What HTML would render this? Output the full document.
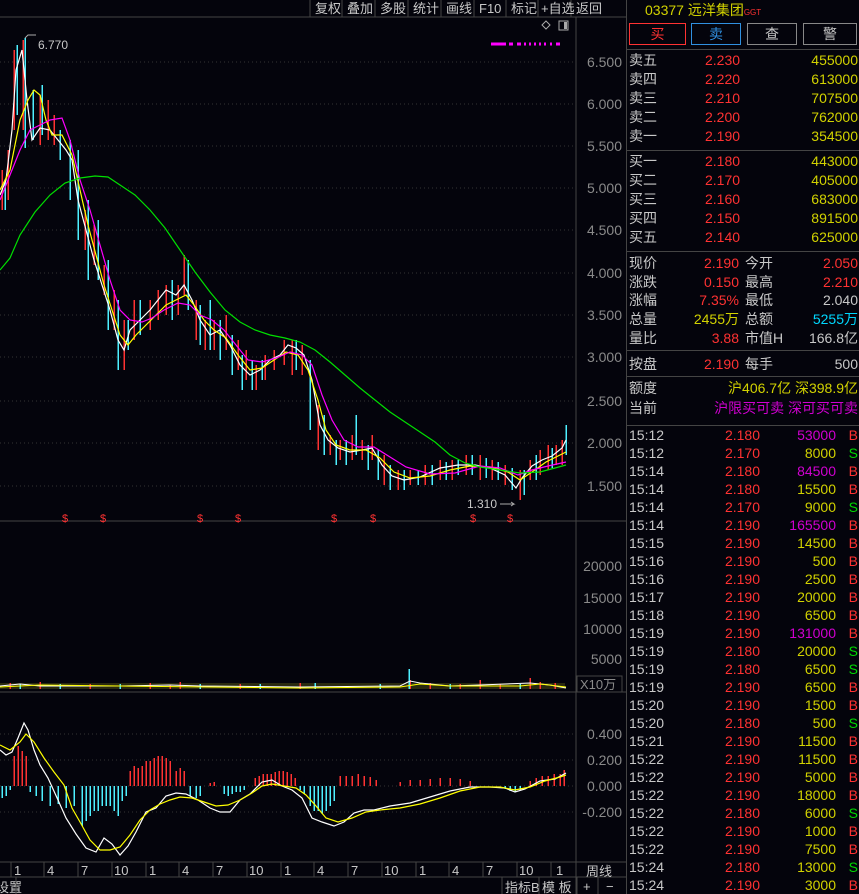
<!DOCTYPE html>
<html><head><meta charset="utf-8"><style>
*{margin:0;padding:0;box-sizing:border-box}
body{width:859px;height:894px;background:#04040c;overflow:hidden;font-family:"Liberation Sans","Noto Sans CJK SC",sans-serif;font-size:14px;color:#c8c8c8;position:relative}
.a{position:absolute;white-space:nowrap}
.r{color:#ff3232}.y{color:#d2d200}.c{color:#00d8ff}.m{color:#d000d0}.g{color:#00d800}.w{color:#c8c8c8}
.rp{position:absolute;left:626px;top:0;width:233px;height:894px;border-left:1px solid #444}
.row{position:absolute;left:2px;width:229px;height:18px;line-height:18px}
.row span{position:absolute}
.ce{shape-rendering:crispEdges}
</style></head><body>
<svg class="a" style="left:0;top:0" width="626" height="894">
<g fill="#c8c8c8" font-size="13" font-family="Liberation Sans,Noto Sans CJK SC,sans-serif">
<line x1="0" y1="17" x2="626" y2="17" stroke="#444"/>
<g stroke="#444"><line x1="310" y1="0" x2="310" y2="17"/><line x1="342" y1="0" x2="342" y2="17"/><line x1="375" y1="0" x2="375" y2="17"/><line x1="408" y1="0" x2="408" y2="17"/><line x1="441" y1="0" x2="441" y2="17"/><line x1="474" y1="0" x2="474" y2="17"/><line x1="506" y1="0" x2="506" y2="17"/><line x1="538" y1="0" x2="538" y2="17"/><line x1="571" y1="0" x2="571" y2="17"/></g>
<text x="315" y="13">复权</text><text x="347" y="13">叠加</text><text x="380" y="13">多股</text><text x="413" y="13">统计</text><text x="446" y="13">画线</text><text x="479" y="13">F10</text><text x="511" y="13">标记</text><text x="541" y="13">+自选</text><text x="576" y="13">返回</text>
</g>
<line x1="576" y1="17" x2="576" y2="894" stroke="#444"/>
<line x1="0" y1="521" x2="626" y2="521" stroke="#444"/>
<line x1="0" y1="692" x2="626" y2="692" stroke="#444"/>
<line x1="0" y1="862" x2="626" y2="862" stroke="#444"/>
<line x1="0" y1="877" x2="626" y2="877" stroke="#444"/>
<g stroke="#333" stroke-dasharray="1,3">
<line x1="0" y1="62" x2="576" y2="62"/><line x1="0" y1="104" x2="576" y2="104"/><line x1="0" y1="146" x2="576" y2="146"/><line x1="0" y1="188" x2="576" y2="188"/><line x1="0" y1="230" x2="576" y2="230"/><line x1="0" y1="273" x2="576" y2="273"/><line x1="0" y1="315" x2="576" y2="315"/><line x1="0" y1="357" x2="576" y2="357"/><line x1="0" y1="401" x2="576" y2="401"/><line x1="0" y1="443" x2="576" y2="443"/><line x1="0" y1="486" x2="576" y2="486"/>
<line x1="0" y1="734" x2="576" y2="734"/><line x1="0" y1="760" x2="576" y2="760"/><line x1="0" y1="786" x2="576" y2="786"/><line x1="0" y1="812" x2="576" y2="812"/>
</g>
<g fill="#8a8a8a" font-size="14" font-family="Liberation Sans,sans-serif" text-anchor="end">
<text x="622" y="67">6.500</text><text x="622" y="109">6.000</text><text x="622" y="151">5.500</text><text x="622" y="193">5.000</text><text x="622" y="235">4.500</text><text x="622" y="278">4.000</text><text x="622" y="320">3.500</text><text x="622" y="362">3.000</text><text x="622" y="406">2.500</text><text x="622" y="448">2.000</text><text x="622" y="491">1.500</text>
<text x="622" y="571">20000</text><text x="622" y="603">15000</text><text x="622" y="634">10000</text><text x="622" y="664">5000</text>
<text x="622" y="739">0.400</text><text x="622" y="765">0.200</text><text x="622" y="791">0.000</text><text x="622" y="817">-0.200</text>
</g>
<rect x="577" y="676" width="45" height="16" fill="none" stroke="#444"/>
<text x="580" y="689" fill="#8a8a8a" font-size="13" font-family="Liberation Sans,Noto Sans CJK SC,sans-serif">X10万</text>
<path d="M546 21 l4 4 -4 4 -4 -4z" fill="none" stroke="#aaa"/>
<rect x="559" y="21" width="9" height="9" fill="none" stroke="#aaa"/><rect x="564" y="22" width="3" height="7" fill="#aaa"/>
<path d="M491 44 h15 M509 44 h4 M517 44 h4 M524 44 h2 M529 44 h2 M534 44 h2 M539 44 h2 M544 44 h2 M550 44 h2 M556 44 h4" stroke="#ff00ff" stroke-width="3"/>
<g stroke-width="1.5" class="ce">
<path stroke="#ff3232" d="M2 170v40 M8 150v50 M14 50v80 M23 40v90 M40 95v50 M48 100v40 M54 115v30 M85 210v40 M94 225v40 M104 265v30 M114 290v40 M124 320v50 M134 300v40 M150 300v30 M158 290v30 M166 285v30 M178 285v30 M184 255v40 M196 300v40 M205 320v30 M214 320v30 M226 315v35 M238 340v30 M246 350v30 M256 365v25 M265 355v25 M274 350v20 M284 340v25 M292 340v35 M302 345v30 M318 405v45 M330 435v20 M340 440v20 M352 435v25 M362 440v20 M372 435v25 M384 455v30 M398 470v20 M410 470v15 M425 465v20 M440 460v20 M452 460v20 M466 455v20 M480 455v25 M492 460v20 M505 465v20 M520 470v30 M530 460v20 M540 450v25 M548 445v25 M556 445v20 M562 440v25"/>
<path stroke="#4ef0ff" d="M5 180v30 M17 45v70 M25 38v110 M33 90v50 M42 85v50 M60 130v30 M70 140v60 M78 150v90 M88 200v80 M98 220v60 M108 260v70 M118 300v70 M128 320v30 M140 300v35 M172 280v40 M188 260v50 M200 305v40 M210 300v50 M220 320v40 M232 335v40 M242 355v35 M252 360v30 M262 360v20 M296 340v30 M310 360v70 M324 415v40 M336 440v25 M346 440v25 M356 415v40 M368 445v25 M378 450v30 M390 465v25 M404 470v20 M418 470v15 M432 465v20 M446 462v18 M458 460v15 M472 455v20 M486 458v20 M498 462v18 M512 468v22 M524 470v25 M536 455v25 M552 448v20 M566 425v30"/>
</g>
<polyline fill="none" stroke="#ffffff" stroke-width="1.2" points="0,195 6,180 12,130 16,70 22,50 27,100 32,140 40,128 50,130 58,140 66,150 72,160 78,200 86,230 94,260 102,285 110,310 118,340 124,350 130,330 140,320 150,310 158,300 166,290 176,295 184,285 192,300 200,320 210,335 220,330 230,345 240,365 250,375 260,370 270,360 280,355 288,345 296,348 304,355 312,380 320,425 328,440 338,448 350,452 362,450 372,448 382,465 392,476 404,480 420,477 440,468 458,465 475,465 490,468 505,475 516,488 522,478 532,466 542,460 552,456 562,448 566,440"/>
<polyline fill="none" stroke="#ffff00" stroke-width="1.2" points="0,190 10,170 20,120 28,100 34,90 40,95 46,120 52,135 62,135 72,155 80,190 88,225 96,255 104,285 112,310 120,335 128,345 136,335 146,325 156,315 166,305 176,300 186,295 194,305 204,320 214,330 226,338 238,355 250,370 262,368 274,360 286,352 298,355 308,370 318,400 326,430 336,445 350,450 366,450 380,458 394,472 410,478 430,476 450,470 470,466 490,467 508,472 520,480 532,472 546,462 560,455 566,452"/>
<polyline fill="none" stroke="#ff00ff" stroke-width="1.2" points="0,200 10,175 20,150 30,130 40,125 50,120 62,118 70,140 80,180 90,210 100,245 110,280 120,310 130,320 142,322 152,318 164,310 178,303 190,305 200,315 212,320 224,330 236,345 248,360 262,362 276,358 290,352 302,355 312,365 322,395 332,420 344,440 358,447 374,447 390,457 406,467 430,474 455,473 480,466 500,468 518,475 532,470 548,466 566,462"/>
<polyline fill="none" stroke="#00e000" stroke-width="1.2" points="0,270 10,258 20,235 35,212 50,195 65,183 80,178 95,176 108,177 120,185 135,195 150,210 165,228 180,250 195,272 210,292 225,310 240,322 255,330 270,335 285,338 300,342 315,350 330,362 345,375 360,388 375,400 390,412 405,422 420,432 435,442 450,455 465,463 480,467 500,470 520,473 540,472 555,468 566,465"/>
<g fill="#c8c8c8" font-size="12" font-family="Liberation Sans,sans-serif">
<path d="M25 38 l3 -3 h8" stroke="#aaa" fill="none"/><text x="38" y="49">6.770</text>
<text x="467" y="508">1.310</text><path d="M500 504 h14 l-3 -2 m3 2 l-3 2" stroke="#aaa" fill="none"/>
</g>
<g fill="#ff3232" font-size="11" font-family="Liberation Sans,sans-serif"><text x="62" y="522">$</text><text x="100" y="522">$</text><text x="197" y="522">$</text><text x="235" y="522">$</text><text x="331" y="522">$</text><text x="370" y="522">$</text><text x="470" y="522">$</text><text x="507" y="522">$</text></g>
<path d="M0 683 h565 v6 h-565z" fill="#2a2a10"/>
<g class="ce" stroke-width="1.5">
<path stroke="#ff3232" d="M10 683v6 M40 682v7 M90 684v5 M150 683v6 M170 685v4 M180 682v7 M240 684v5 M300 683v6 M410 680v9 M430 683v6 M460 684v5 M480 680v9 M500 684v5 M530 678v11 M540 682v7 M555 683v6"/>
<path stroke="#4ef0ff" d="M20 684v5 M60 684v5 M120 684v5 M200 684v5 M260 684v5 M315 683v6 M380 684v5 M409 669v20 M450 684v5 M520 684v5"/>
</g>
<polyline fill="none" stroke="#fff" points="0,686 20,684 40,686 120,686 170,685 200,686 300,687 400,686 410,681 420,683 450,686 480,685 530,683 550,685 566,688"/>
<polyline fill="none" stroke="#ff0" points="0,687 40,685 120,686 300,688 400,687 420,684 450,686 520,686 540,684 566,687"/>
<g class="ce" stroke-width="1.5">
<path stroke="#ff3232" d="M14 786v-30 M18 786v-40 M22 786v-35 M26 786v-30 M130 786v-15 M134 786v-20 M138 786v-18 M142 786v-20 M146 786v-25 M150 786v-25 M154 786v-28 M158 786v-30 M162 786v-30 M166 786v-28 M170 786v-25 M176 786v-15 M180 786v-18 M184 786v-15 M210 786v-3 M214 786v-4 M255 786v-8 M259 786v-10 M263 786v-12 M267 786v-12 M271 786v-12 M275 786v-14 M279 786v-15 M283 786v-15 M287 786v-14 M291 786v-12 M295 786v-8 M340 786v-10 M346 786v-10 M352 786v-10 M358 786v-12 M364 786v-10 M370 786v-9 M376 786v-6 M400 786v-4 M410 786v-6 M420 786v-6 M430 786v-7 M440 786v-8 M450 786v-8 M460 786v-7 M470 786v-5 M530 786v-5 M536 786v-8 M542 786v-10 M548 786v-10 M554 786v-12 M560 786v-12 M564 786v-16"/>
<path stroke="#4ef0ff" d="M2 786v12 M6 786v10 M10 786v4 M30 786v6 M36 786v10 M42 786v15 M50 786v20 M58 786v18 M66 786v22 M74 786v20 M82 786v40 M86 786v35 M90 786v30 M94 786v25 M98 786v25 M102 786v20 M106 786v20 M110 786v20 M114 786v25 M118 786v30 M122 786v15 M126 786v10 M190 786v10 M196 786v12 M200 786v10 M224 786v8 M228 786v10 M232 786v8 M236 786v6 M240 786v6 M244 786v4 M300 786v4 M304 786v8 M310 786v20 M314 786v25 M318 786v25 M322 786v28 M326 786v25 M330 786v20 M334 786v15 M505 786v3 M510 786v5 M515 786v6 M520 786v4"/>
</g>
<polyline fill="none" stroke="#ffffff" stroke-width="1.2" points="0,750 6,755 12,752 18,738 24,723 28,730 34,750 40,765 48,778 58,800 66,818 76,834 86,848 96,852 104,838 112,844 120,855 128,846 136,832 146,812 156,808 166,796 176,793 186,794 198,800 210,808 220,812 230,812 240,800 250,794 262,782 272,780 282,786 292,790 302,798 312,818 322,822 334,826 344,822 354,813 364,810 374,810 390,806 410,803 430,797 450,791 470,787 490,787 505,788 515,792 525,789 540,781 555,779 566,773"/>
<polyline fill="none" stroke="#ffff00" stroke-width="1.2" points="0,745 10,750 20,742 26,734 34,742 44,758 54,772 64,785 72,808 80,822 90,840 100,850 110,850 120,847 130,835 140,820 150,810 160,804 170,800 180,797 192,798 204,802 216,806 228,805 240,800 252,793 262,786 272,784 284,786 296,788 306,795 316,806 326,818 338,822 352,818 366,812 380,810 400,808 420,804 440,798 460,791 480,787 500,787 515,790 530,787 545,781 560,777 566,775"/>
<g fill="#c8c8c8" font-size="13" font-family="Liberation Sans,Noto Sans CJK SC,sans-serif">
<g stroke="#444"><line x1="11" y1="862" x2="11" y2="877"/><line x1="44" y1="862" x2="44" y2="877"/><line x1="78" y1="862" x2="78" y2="877"/><line x1="112" y1="862" x2="112" y2="877"/><line x1="146" y1="862" x2="146" y2="877"/><line x1="179" y1="862" x2="179" y2="877"/><line x1="213" y1="862" x2="213" y2="877"/><line x1="247" y1="862" x2="247" y2="877"/><line x1="281" y1="862" x2="281" y2="877"/><line x1="314" y1="862" x2="314" y2="877"/><line x1="348" y1="862" x2="348" y2="877"/><line x1="382" y1="862" x2="382" y2="877"/><line x1="416" y1="862" x2="416" y2="877"/><line x1="449" y1="862" x2="449" y2="877"/><line x1="483" y1="862" x2="483" y2="877"/><line x1="517" y1="862" x2="517" y2="877"/><line x1="551" y1="862" x2="551" y2="877"/></g>
<text x="14" y="875">1</text><text x="47" y="875">4</text><text x="81" y="875">7</text><text x="114" y="875">10</text><text x="149" y="875">1</text><text x="182" y="875">4</text><text x="216" y="875">7</text><text x="249" y="875">10</text><text x="284" y="875">1</text><text x="317" y="875">4</text><text x="351" y="875">7</text><text x="384" y="875">10</text><text x="419" y="875">1</text><text x="452" y="875">4</text><text x="486" y="875">7</text><text x="519" y="875">10</text><text x="556" y="875">1</text>
<text x="586" y="876">周线</text>
<text x="-4" y="892">设置</text><line x1="16" y1="877" x2="16" y2="894" stroke="#444"/>
<line x1="502" y1="877" x2="502" y2="894" stroke="#444"/><text x="505" y="892">指标B</text>
<line x1="539" y1="877" x2="539" y2="894" stroke="#444"/><text x="542" y="892">模 板</text>
<line x1="577" y1="877" x2="577" y2="894" stroke="#444"/><text x="583" y="891">+</text>
<line x1="598" y1="877" x2="598" y2="894" stroke="#444"/><text x="606" y="891">−</text>
</g>
</svg>
<div class="rp">
<div class="a y" style="left:18px;top:0;font-size:14px">03377 远洋集团<span class="r" style="font-size:8px">GGT</span></div>
<div class="a" style="left:2px;top:23px;width:57px;height:22px;border:1px solid #ff3232;color:#ff3232;text-align:center;line-height:20px">买</div>
<div class="a" style="left:64px;top:23px;width:50px;height:22px;border:1px solid #3090e0;color:#3090e0;text-align:center;line-height:20px">卖</div>
<div class="a" style="left:120px;top:23px;width:50px;height:22px;border:1px solid #888;text-align:center;line-height:20px">查</div>
<div class="a" style="left:176px;top:23px;width:54px;height:22px;border:1px solid #888;text-align:center;line-height:20px">警</div>
<div class="a" style="left:0;top:49px;width:233px;border-top:1px solid #444"></div>
<div class="a" style="left:0;top:150px;width:233px;border-top:1px solid #444"></div>
<div class="a" style="left:0;top:251px;width:233px;border-top:1px solid #444"></div>
<div class="a" style="left:0;top:350px;width:233px;border-top:1px solid #444"></div>
<div class="a" style="left:0;top:376px;width:233px;border-top:1px solid #444"></div>
<div class="a" style="left:0;top:425px;width:233px;border-top:1px solid #444"></div>
<div class="row" style="top:51px"><span>卖五</span><span class="r" style="left:76px">2.230</span><span class="y" style="right:0">455000</span></div>
<div class="row" style="top:70px"><span>卖四</span><span class="r" style="left:76px">2.220</span><span class="y" style="right:0">613000</span></div>
<div class="row" style="top:89px"><span>卖三</span><span class="r" style="left:76px">2.210</span><span class="y" style="right:0">707500</span></div>
<div class="row" style="top:108px"><span>卖二</span><span class="r" style="left:76px">2.200</span><span class="y" style="right:0">762000</span></div>
<div class="row" style="top:127px"><span>卖一</span><span class="r" style="left:76px">2.190</span><span class="y" style="right:0">354500</span></div>
<div class="row" style="top:152px"><span>买一</span><span class="r" style="left:76px">2.180</span><span class="y" style="right:0">443000</span></div>
<div class="row" style="top:171px"><span>买二</span><span class="r" style="left:76px">2.170</span><span class="y" style="right:0">405000</span></div>
<div class="row" style="top:190px"><span>买三</span><span class="r" style="left:76px">2.160</span><span class="y" style="right:0">683000</span></div>
<div class="row" style="top:209px"><span>买四</span><span class="r" style="left:76px">2.150</span><span class="y" style="right:0">891500</span></div>
<div class="row" style="top:228px"><span>买五</span><span class="r" style="left:76px">2.140</span><span class="y" style="right:0">625000</span></div>
<div class="row" style="top:254px"><span>现价</span><span class="r" style="right:119px">2.190</span><span style="left:116px">今开</span><span class="r" style="right:0">2.050</span></div>
<div class="row" style="top:273px"><span>涨跌</span><span class="r" style="right:119px">0.150</span><span style="left:116px">最高</span><span class="r" style="right:0">2.210</span></div>
<div class="row" style="top:291px"><span>涨幅</span><span class="r" style="right:119px">7.35%</span><span style="left:116px">最低</span><span style="right:0">2.040</span></div>
<div class="row" style="top:310px"><span>总量</span><span class="y" style="right:119px">2455万</span><span style="left:116px">总额</span><span class="c" style="right:0">5255万</span></div>
<div class="row" style="top:329px"><span>量比</span><span class="r" style="right:119px">3.88</span><span style="left:116px">市值H</span><span style="right:0">166.8亿</span></div>
<div class="row" style="top:355px"><span>按盘</span><span class="r" style="right:119px">2.190</span><span style="left:116px">每手</span><span style="right:0">500</span></div>
<div class="row" style="top:379px"><span>额度</span><span class="y" style="right:0">沪406.7亿 深398.9亿</span></div>
<div class="row" style="top:399px"><span>当前</span><span class="m" style="right:0">沪限买可卖 深可买可卖</span></div>
<div class="row" style="top:426px"><span>15:12</span><span class="r" style="right:98px">2.180</span><span class="m" style="right:22px">53000</span><span class="r" style="right:0">B</span></div>
<div class="row" style="top:444px"><span>15:12</span><span class="r" style="right:98px">2.170</span><span class="y" style="right:22px">8000</span><span class="g" style="right:0">S</span></div>
<div class="row" style="top:462px"><span>15:14</span><span class="r" style="right:98px">2.180</span><span class="m" style="right:22px">84500</span><span class="r" style="right:0">B</span></div>
<div class="row" style="top:480px"><span>15:14</span><span class="r" style="right:98px">2.180</span><span class="y" style="right:22px">15500</span><span class="r" style="right:0">B</span></div>
<div class="row" style="top:498px"><span>15:14</span><span class="r" style="right:98px">2.170</span><span class="y" style="right:22px">9000</span><span class="g" style="right:0">S</span></div>
<div class="row" style="top:516px"><span>15:14</span><span class="r" style="right:98px">2.190</span><span class="m" style="right:22px">165500</span><span class="r" style="right:0">B</span></div>
<div class="row" style="top:534px"><span>15:15</span><span class="r" style="right:98px">2.190</span><span class="y" style="right:22px">14500</span><span class="r" style="right:0">B</span></div>
<div class="row" style="top:552px"><span>15:16</span><span class="r" style="right:98px">2.190</span><span class="y" style="right:22px">500</span><span class="r" style="right:0">B</span></div>
<div class="row" style="top:570px"><span>15:16</span><span class="r" style="right:98px">2.190</span><span class="y" style="right:22px">2500</span><span class="r" style="right:0">B</span></div>
<div class="row" style="top:588px"><span>15:17</span><span class="r" style="right:98px">2.190</span><span class="y" style="right:22px">20000</span><span class="r" style="right:0">B</span></div>
<div class="row" style="top:606px"><span>15:18</span><span class="r" style="right:98px">2.190</span><span class="y" style="right:22px">6500</span><span class="r" style="right:0">B</span></div>
<div class="row" style="top:624px"><span>15:19</span><span class="r" style="right:98px">2.190</span><span class="m" style="right:22px">131000</span><span class="r" style="right:0">B</span></div>
<div class="row" style="top:642px"><span>15:19</span><span class="r" style="right:98px">2.180</span><span class="y" style="right:22px">20000</span><span class="g" style="right:0">S</span></div>
<div class="row" style="top:660px"><span>15:19</span><span class="r" style="right:98px">2.180</span><span class="y" style="right:22px">6500</span><span class="g" style="right:0">S</span></div>
<div class="row" style="top:678px"><span>15:19</span><span class="r" style="right:98px">2.190</span><span class="y" style="right:22px">6500</span><span class="r" style="right:0">B</span></div>
<div class="row" style="top:696px"><span>15:20</span><span class="r" style="right:98px">2.190</span><span class="y" style="right:22px">1500</span><span class="r" style="right:0">B</span></div>
<div class="row" style="top:714px"><span>15:20</span><span class="r" style="right:98px">2.180</span><span class="y" style="right:22px">500</span><span class="g" style="right:0">S</span></div>
<div class="row" style="top:732px"><span>15:21</span><span class="r" style="right:98px">2.190</span><span class="y" style="right:22px">11500</span><span class="r" style="right:0">B</span></div>
<div class="row" style="top:750px"><span>15:22</span><span class="r" style="right:98px">2.190</span><span class="y" style="right:22px">11500</span><span class="r" style="right:0">B</span></div>
<div class="row" style="top:768px"><span>15:22</span><span class="r" style="right:98px">2.190</span><span class="y" style="right:22px">5000</span><span class="r" style="right:0">B</span></div>
<div class="row" style="top:786px"><span>15:22</span><span class="r" style="right:98px">2.190</span><span class="y" style="right:22px">18000</span><span class="r" style="right:0">B</span></div>
<div class="row" style="top:804px"><span>15:22</span><span class="r" style="right:98px">2.180</span><span class="y" style="right:22px">6000</span><span class="g" style="right:0">S</span></div>
<div class="row" style="top:822px"><span>15:22</span><span class="r" style="right:98px">2.190</span><span class="y" style="right:22px">1000</span><span class="r" style="right:0">B</span></div>
<div class="row" style="top:840px"><span>15:22</span><span class="r" style="right:98px">2.190</span><span class="y" style="right:22px">7500</span><span class="r" style="right:0">B</span></div>
<div class="row" style="top:858px"><span>15:24</span><span class="r" style="right:98px">2.180</span><span class="y" style="right:22px">13000</span><span class="g" style="right:0">S</span></div>
<div class="row" style="top:876px"><span>15:24</span><span class="r" style="right:98px">2.190</span><span class="y" style="right:22px">3000</span><span class="r" style="right:0">B</span></div>
</div>
</body></html>
